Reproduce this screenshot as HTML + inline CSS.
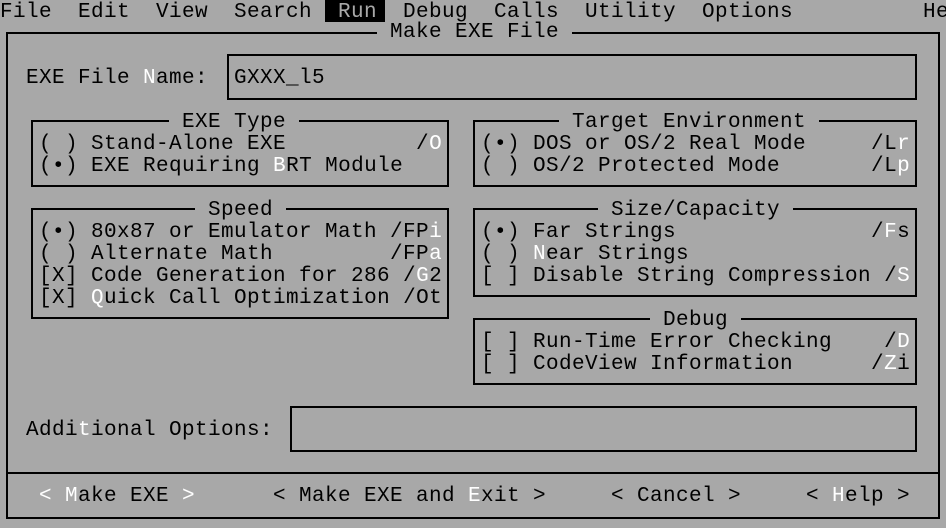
<!DOCTYPE html>
<html><head><meta charset="utf-8"><style>
html,body{margin:0;padding:0}
body{width:946px;height:528px;background:#a8a8a8;position:relative;overflow:hidden;font-family:"Liberation Mono","DejaVu Sans Mono",monospace;font-size:21px;letter-spacing:0.4px;color:#000}
.t{position:absolute;white-space:pre;line-height:22px;height:22px;margin-top:2px}
.b{position:absolute;border:2px solid #000;box-sizing:border-box}
.w{color:#fff}
.bg{background:#a8a8a8}
</style></head><body>
<div class="b" style="left:6px;top:32px;width:934px;height:487px"></div>
<div class="b" style="left:6px;top:472px;width:934px;height:2px;border-width:2px 0 0 0"></div>
<div class="b" style="left:227px;top:54px;width:690px;height:46px"></div>
<div class="b" style="left:290px;top:406px;width:627px;height:46px"></div>
<div class="b" style="left:31px;top:120px;width:418px;height:67px"></div>
<div class="b" style="left:31px;top:208px;width:418px;height:111px"></div>
<div class="b" style="left:473px;top:120px;width:444px;height:67px"></div>
<div class="b" style="left:473px;top:208px;width:444px;height:89px"></div>
<div class="b" style="left:473px;top:318px;width:444px;height:67px"></div>

<div class="t" style="left:0;top:0">File  Edit  View  Search</div>
<div class="t" style="left:325px;top:0;margin-top:0;padding-top:2px;height:20px;background:#000;color:#a8a8a8;width:60px"> Run</div>
<div class="t" style="left:403px;top:0">Debug  Calls  Utility  Options</div>
<div class="t" style="left:923px;top:0">He</div>

<div class="t bg" style="left:377px;top:20px;padding-bottom:2px"> Make EXE File </div>
<div class="t" style="left:26px;top:66px">EXE File <span class="w">N</span>ame:</div>
<div class="t" style="left:234px;top:66px">GXXX_l5</div>

<div class="t bg" style="left:169px;top:110px"> EXE Type </div>
<div class="t" style="left:39px;top:132px">( ) Stand-Alone EXE          /<span class="w">O</span></div>
<div class="t" style="left:39px;top:154px">(•) EXE Requiring <span class="w">B</span>RT Module</div>

<div class="t bg" style="left:559px;top:110px"> Target Environment </div>
<div class="t" style="left:481px;top:132px">(•) DOS or OS/2 Real Mode     /L<span class="w">r</span></div>
<div class="t" style="left:481px;top:154px">( ) OS/2 Protected Mode       /L<span class="w">p</span></div>

<div class="t bg" style="left:195px;top:198px"> Speed </div>
<div class="t" style="left:39px;top:220px">(•) 80x87 or Emulator Math /FP<span class="w">i</span></div>
<div class="t" style="left:39px;top:242px">( ) Alternate Math         /FP<span class="w">a</span></div>
<div class="t" style="left:39px;top:264px">[X] Code Generation for 286 /<span class="w">G</span>2</div>
<div class="t" style="left:39px;top:286px">[X] <span class="w">Q</span>uick Call Optimization /Ot</div>

<div class="t bg" style="left:598px;top:198px"> Size/Capacity </div>
<div class="t" style="left:481px;top:220px">(•) Far Strings               /<span class="w">F</span>s</div>
<div class="t" style="left:481px;top:242px">( ) <span class="w">N</span>ear Strings</div>
<div class="t" style="left:481px;top:264px">[ ] Disable String Compression /<span class="w">S</span></div>

<div class="t bg" style="left:650px;top:308px"> Debug </div>
<div class="t" style="left:481px;top:330px">[ ] Run-Time Error Checking    /<span class="w">D</span></div>
<div class="t" style="left:481px;top:352px">[ ] CodeView Information      /<span class="w">Z</span>i</div>

<div class="t" style="left:26px;top:418px">Addi<span class="w">t</span>ional Options:</div>

<div class="t" style="left:39px;top:484px"><span class="w">&lt; M</span>ake EXE <span class="w">&gt;</span></div>
<div class="t" style="left:273px;top:484px">&lt; Make EXE and <span class="w">E</span>xit &gt;</div>
<div class="t" style="left:611px;top:484px">&lt; Cancel &gt;</div>
<div class="t" style="left:806px;top:484px">&lt; <span class="w">H</span>elp &gt;</div>
</body></html>
